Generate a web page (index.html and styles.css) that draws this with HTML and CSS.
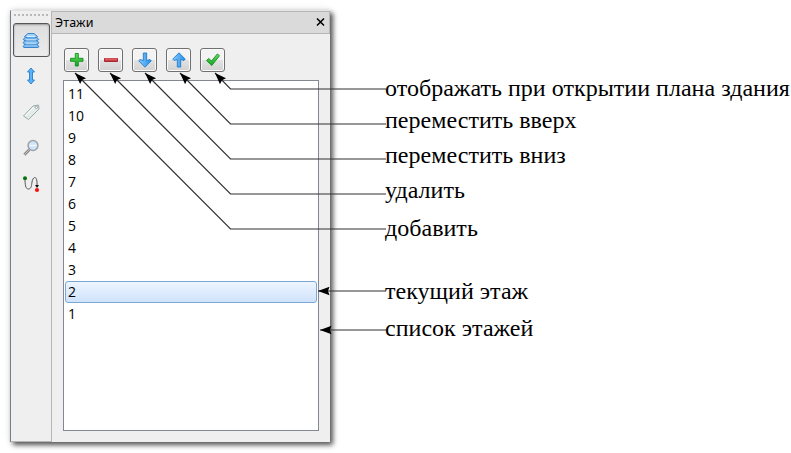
FILE: index.html
```html
<!DOCTYPE html>
<html lang="ru">
<head>
<meta charset="utf-8">
<title>Этажи</title>
<link rel="stylesheet" href="styles.css">
</head>
<body>
<main class="figure">
  <section class="window">
    <nav class="toolbar">
      <div class="grip"></div>
      <div class="tool active">
        <svg width="18" height="18" viewBox="0 0 18 18"><defs><linearGradient id="blue" x1="0" y1="0" x2="1" y2="0"><stop stop-color="#8bcaff"/><stop offset="1" stop-color="#208ee8"/></linearGradient><linearGradient id="green" x2="0" y2="1"><stop stop-color="#62e262"/><stop offset="1" stop-color="#13a51c"/></linearGradient></defs><g fill="#83bdf0" stroke="#2a7cc8" stroke-width=".9"><path d="M4 12h10l3 3.600-1 .9H2l-1-.9z"/><path d="M4 8.500h10l3 3.300-1.500 1.200h-13L1 11.800z"/><path d="M4 5.500h10l2.800 3-1.800 1.200H3L1.200 8.500z"/><path d="M6 2.500h6l3.500 3L13 6.800H5L2.500 5.500z" fill="#a5d3f8"/></g><path d="M5 5.600h8M4 8.900h10M3.500 12.200h11" fill="none" stroke="#e2f4ff" stroke-width=".9"/></svg>
      </div>
      <div class="tool"><svg width="18" height="18" viewBox="0 0 18 18"><path d="M9 1l3.500 4h-2v8h2L9 17l-3.500-4h2V5h-2z" fill="#5db1f8" stroke="#227fc9" stroke-width=".9"/></svg></div>
      <div class="tool"><svg width="18" height="18" viewBox="0 0 18 18"><path d="M1.500 13 11 3l5.500-1 .5 4L6.500 16.500z" fill="#e4ecea" stroke="#9babaa"/><path d="m3 13 9-9" stroke="#fff"/><circle cx="14.300" cy="4.300" r="1.200" fill="#fff" stroke="#849592" stroke-width=".8"/></svg></div>
      <div class="tool"><svg width="18" height="18" viewBox="0 0 18 18"><path d="m2.300 15.800 5-5" stroke="#858585" stroke-width="2.800"/><path d="m2.300 15.800 5-5" stroke="#ccc" stroke-width="1"/><circle cx="11" cy="6.500" r="4.900" fill="#cde5fa" stroke="#a0a0a8" stroke-width="1.500"/><path d="M7.500 6.500h7" stroke="#f4faff" stroke-width="1.300"/></svg></div>
      <div class="tool"><svg width="18" height="18" viewBox="0 0 18 18"><path d="M3 3c0 7 .5 11 3.500 11s3-4 3.500-7c.8-5 4.500-7 5 0v4" fill="none" stroke="#555"/><path d="M13 10h4l-2 3z" fill="#111"/><circle cx="3" cy="3.200" r="2" fill="#08720d"/><circle cx="15" cy="15" r="2.100" fill="#f51212"/></svg></div>
    </nav>
    <div class="dock">
      <header class="title"><span>Этажи</span><svg width="9" height="8" viewBox="0 0 9 8"><path d="m1 .5 7 7m0-7-7 7" stroke="#000" stroke-width="1.500"/></svg></header>
      <div class="content">
        <div class="buttons">
          <button><svg width="16" height="16" viewBox="0 0 16 16"><path d="M6.300 1.500h3v4.800H14v3H9.300V14h-3V9.300H1.500v-3h4.800z" fill="url(#green)" stroke="#168b20" stroke-width=".9"/></svg></button>
          <button><svg width="16" height="16" viewBox="0 0 16 16"><path d="M1.500 6.500h13v3h-13z" fill="#d23c43" stroke="#a62931"/><path d="M2 7h12" stroke="#e67b80"/></svg></button>
          <button><svg width="16" height="16" viewBox="0 0 16 16"><path d="M6.300 1h3.400v7.500l3.300-1 1.300 1.300L8 15.200 1.700 8.800 3 7.500l3.300 1z" fill="url(#blue)" stroke="#217cc5" stroke-width=".9"/></svg></button>
          <button><svg width="16" height="16" viewBox="0 0 16 16"><path d="M6.300 15h3.400V7.500l3.300 1 1.300-1.300L8 .8 1.700 7.200 3 8.500l3.300-1z" fill="url(#blue)" stroke="#217cc5" stroke-width=".9"/></svg></button>
          <button><svg width="16" height="16" viewBox="0 0 16 16"><path d="m1.500 8.500 2.300-2L6.500 9l5.800-7 2.200 1.700-7.700 9.800z" fill="url(#green)" stroke="#168b20" stroke-width=".9"/></svg></button>
        </div>
        <ul class="floors"><li>11</li><li>10</li><li>9</li><li>8</li><li>7</li><li>6</li><li>5</li><li>4</li><li>3</li><li class="selected">2</li><li>1</li></ul>
      </div>
    </div>
  </section>
  <section class="labels">
    <p class="show">отображать при открытии плана здания</p>
    <p class="up">переместить вверх</p>
    <p class="down">переместить вниз</p>
    <p class="remove">удалить</p>
    <p class="add">добавить</p>
    <p class="current">текущий этаж</p>
    <p class="list">список этажей</p>
  </section>
  <svg class="callouts" width="791" height="453" viewBox="0 0 791 453">
    <defs><marker id="arrow" markerUnits="userSpaceOnUse" markerWidth="12" markerHeight="10" refX="0" refY="5" orient="auto"><path d="M0 5 11.500.8 10 5l1.500 4.200z"/></marker></defs>
    <g class="leaders">
      <path d="M215 73 230.500 89H386"/>
      <path d="M180 73 230.500 124H386"/>
      <path d="M145 73 230.500 159H386"/>
      <path d="M110 73 230.500 194H386"/>
      <path d="M75 73 230.500 229H386"/>
      <path d="M318 291H386"/>
      <path d="M320 330H386"/>
    </g>
  </svg>
</main>
</body>
</html>
```
FILE: styles.css
```css
* { box-sizing: border-box; }
body { margin: 0; background: #fff; overflow: hidden; }
.figure { position: relative; display: flex; width: 791px; height: 453px; padding-top: 10px; padding-left: 10px; }
.window { display: flex; flex: none; width: 320px; height: 432px; background: #efefef; border-left: 1px solid #727e8c; border-top: 1px solid #e4e4e4; box-shadow: 3px 3px 5px rgba(0,0,0,.65), 0 0 7px rgba(0,0,0,.12); }
.toolbar { display: flex; flex-direction: column; align-items: center; width: 41px; border-right: 1px solid #b5b5b5; border-bottom: 1px solid #b5b5b5; }
.grip { width: 34px; height: 2px; margin: 3px 0 7px; background: repeating-linear-gradient(90deg, #b8b8b8 0 2px, transparent 2px 4px); }
.tool { display: flex; align-items: center; justify-content: center; width: 37px; height: 36px; }
.tool.active { height: 34px; margin-bottom: 1px; border: 1px solid #555; border-radius: 3px; background: linear-gradient(#dedede, #ececec); box-shadow: inset 0 1px 2px #999; }
.dock { flex: 1; display: flex; flex-direction: column; }
.title { display: flex; align-items: center; justify-content: space-between; height: 23px; padding: 0 4px 0 3px; border: 1px solid #b6b6b6; border-left: 0; background: #dadada; font: 12.500px "Noto Sans", sans-serif; }
.title span { letter-spacing: .15px; }
.title svg { margin-bottom: 1px; }
.content { display: flex; flex: 1; flex-direction: column; padding: 14px 11px 11px; }
.buttons { display: flex; gap: 9px; padding-left: 1px; }
button { display: flex; align-items: center; justify-content: center; width: 25px; height: 24px; padding: 0; border: 1px solid #707070; border-radius: 3px; background: linear-gradient(#f3f3f3 0 48%, #e1e1e1 52%, #d2d2d2); box-shadow: inset 0 0 0 1px #fafafa; }
.floors { flex: 1; margin: 8px 0 0; padding: 2px 1px; list-style: none; border: 1px solid #828790; background: #fff; font: 14px/22px "Open Sans", sans-serif; }
.floors li { height: 22px; padding-left: 2px; border: 1px solid transparent; border-radius: 3px; line-height: 20px; }
.floors .selected { border-color: #7da7d2; background: linear-gradient(#edf5ff, #cfe3fc); }
.labels { padding: 66px 0 0 55px; font: 24px/24px "Liberation Serif", serif; letter-spacing: .02px; white-space: nowrap; }
.labels p { margin: 0; }
.labels .up { margin-top: 8px; }
.labels .down { margin-top: 11px; }
.labels .remove { margin-top: 11px; }
.labels .add { margin-top: 14px; }
.labels .current { margin-top: 39px; }
.labels .list { margin-top: 13px; }
.callouts { position: absolute; inset: 0; pointer-events: none; }
.leaders path { fill: none; stroke: #303030; stroke-width: 1.150px; marker-start: url(#arrow); }
```
